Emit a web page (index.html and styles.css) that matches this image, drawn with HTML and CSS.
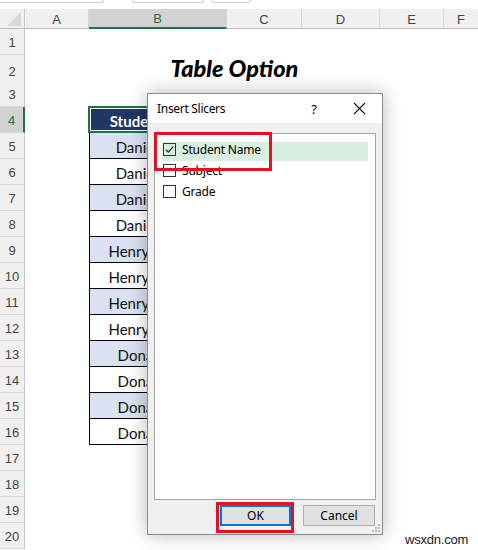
FILE: index.html
```html
<!DOCTYPE html>
<html>
<head>
<meta charset="utf-8">
<link rel="stylesheet" href="styles.css">
</head>
<body>
<div class="app">
  <div class="topstrip">
    <div class="tab tab1"></div>
    <div class="tab tab2"></div>
    <div class="tab tab3"></div>
  </div>
  <div class="sheet">
    <div class="row hdr">
      <div class="corner"><svg width="14" height="14" viewBox="0 0 14 14"><polygon points="14,0 14,14 0,14" fill="#d9d9d9"/></svg></div>
      <div class="ch">A</div>
      <div class="ch sel">B</div>
      <div class="ch">C</div>
      <div class="ch">D</div>
      <div class="ch">E</div>
      <div class="ch last">F</div>
    </div>
    <div class="row"><div class="rh">1</div></div>
    <div class="row"><div class="rh">2</div><div class="title">Table Option</div></div>
    <div class="row"><div class="rh">3</div></div>
    <div class="row"><div class="rh sel">4</div><div class="spacer"></div><div class="tcell thead">Student Name</div></div>
    <div class="row"><div class="rh">5</div><div class="spacer"></div><div class="tcell blue">Daniel James</div></div>
    <div class="row"><div class="rh">6</div><div class="spacer"></div><div class="tcell">Daniel James</div></div>
    <div class="row"><div class="rh">7</div><div class="spacer"></div><div class="tcell blue">Daniel James</div></div>
    <div class="row"><div class="rh">8</div><div class="spacer"></div><div class="tcell">Daniel James</div></div>
    <div class="row"><div class="rh">9</div><div class="spacer"></div><div class="tcell blue">Henry Williams</div></div>
    <div class="row"><div class="rh">10</div><div class="spacer"></div><div class="tcell">Henry Williams</div></div>
    <div class="row"><div class="rh">11</div><div class="spacer"></div><div class="tcell blue">Henry Williams</div></div>
    <div class="row"><div class="rh">12</div><div class="spacer"></div><div class="tcell">Henry Williams</div></div>
    <div class="row"><div class="rh">13</div><div class="spacer"></div><div class="tcell blue">Donald Ross</div></div>
    <div class="row"><div class="rh">14</div><div class="spacer"></div><div class="tcell">Donald Ross</div></div>
    <div class="row"><div class="rh">15</div><div class="spacer"></div><div class="tcell blue">Donald Ross</div></div>
    <div class="row"><div class="rh">16</div><div class="spacer"></div><div class="tcell">Donald Ross</div></div>
    <div class="row"><div class="rh">17</div></div>
    <div class="row"><div class="rh">18</div></div>
    <div class="row"><div class="rh">19</div></div>
    <div class="row"><div class="rh">20</div></div>
  </div>

  <div class="dialog">
    <div class="dtitle">
      <span class="dname">Insert Slicers</span>
      <span class="help">?</span>
      <svg class="close" width="13" height="13" viewBox="0 0 13 13"><path d="M1 1 L12 12 M12 1 L1 12" stroke="#111" stroke-width="1.1" fill="none"/></svg>
    </div>
    <div class="dbody">
      <div class="listbox">
        <div class="item checked">
          <span class="cb"><svg width="11" height="11" viewBox="0 0 11 11"><path d="M1.8 5.6 L4.3 8.1 L9.2 2.6" stroke="#222" stroke-width="1.3" fill="none"/></svg></span>
          <span class="lbl">Student Name</span>
        </div>
        <div class="item"><span class="cb"></span><span class="lbl">Subject</span></div>
        <div class="item"><span class="cb"></span><span class="lbl">Grade</span></div>
      </div>
    </div>
    <div class="dfoot">
      <button class="btn ok">OK</button>
      <button class="btn">Cancel</button>
      <svg class="grip" width="9" height="9" viewBox="0 0 9 9">
        <rect x="7" y="1" width="2" height="2" fill="#bdbdbd"/>
        <rect x="4" y="4" width="2" height="2" fill="#bdbdbd"/>
        <rect x="7" y="4" width="2" height="2" fill="#bdbdbd"/>
        <rect x="1" y="7" width="2" height="2" fill="#bdbdbd"/>
        <rect x="4" y="7" width="2" height="2" fill="#bdbdbd"/>
        <rect x="7" y="7" width="2" height="2" fill="#bdbdbd"/>
      </svg>
    </div>
    <div class="mark mark-list"></div>
    <div class="mark mark-ok"></div>
  </div>

  <div class="watermark">wsxdn.com</div>
</div>
</body>
</html>
```

FILE: styles.css
```css
* { box-sizing: border-box; }
html, body { margin: 0; padding: 0; }
body {
  width: 478px;
  height: 550px;
  overflow: hidden;
  background: #ffffff;
  font-family: "Lato", "Liberation Sans", sans-serif;
}
.app { position: relative; width: 478px; height: 550px; overflow: hidden; }

.topstrip {
  height: 9px;
  background: #ffffff;
  display: flex;
  align-items: flex-start;
}
.tab {
  height: 3px;
  border: 1px solid #cfcfcf;
  border-top: none;
  border-radius: 0 0 5px 5px;
  background: #fff;
}
.tab1 { width: 108px; margin-left: -4px; }
.tab2 { width: 72px; margin-left: 28px; }
.tab3 { width: 40px; margin-left: 7px; }

.sheet { display: flex; flex-direction: column; }
.row {
  display: grid;
  grid-template-columns: 25px 64px 138px 75px 78px 64px 1fr;
  height: 26px;
}
.row.hdr { height: 20px; background: #f0f0f0; }

.corner {
  border-right: 1px solid #c8c8c8;
  border-bottom: 1px solid #bdbdbd;
  display: flex;
  align-items: flex-end;
  justify-content: flex-end;
  padding: 0 3px 2px 0;
}
.ch {
  border-right: 1px solid #d5d5d5;
  border-bottom: 1px solid #bdbdbd;
  display: flex;
  align-items: center;
  justify-content: center;
  font-family: "Liberation Sans", sans-serif;
  font-size: 13px;
  color: #444;
  padding-top: 1px;
}
.ch.last { border-right: none; justify-content: flex-start; padding-left: 13px; }
.ch.sel {
  background: #d2d2d2;
  border-bottom: 2px solid #217346;
  color: #217346;
}

.rh {
  background: #f0f0f0;
  border-right: 1px solid #c8c8c8;
  border-bottom: 1px solid #d8d8d8;
  display: flex;
  align-items: center;
  justify-content: center;
  font-family: "Liberation Sans", sans-serif;
  font-size: 13px;
  color: #444;
  padding-top: 2px;
}
.rh.sel {
  background: #d2d2d2;
  border-right: 2px solid #217346;
  color: #217346;
}

.title {
  grid-column: 3 / 6;
  display: flex;
  align-items: center;
  justify-content: center;
  font-weight: 900;
  font-style: italic;
  font-size: 23.5px;
  line-height: 26px;
  color: #000;
  padding-bottom: 6px;
}

.tcell {
  border-left: 1px solid #000;
  border-bottom: 1px solid #000;
  display: flex;
  align-items: center;
  justify-content: center;
  font-size: 15px;
  color: #111;
  white-space: nowrap;
  overflow: hidden;
  padding-top: 2px;
}
.tcell.blue { background: #d9e1f2; }
.tcell.thead {
  background: #203764;
  color: #fff;
  font-weight: bold;
  border: 2px solid #217346;
  box-shadow: inset 0 0 0 1px #ffffff;
  margin: -1px 0 0 -1px;
  height: 27px;
}

/* dialog */
.dialog {
  position: absolute;
  left: 147px;
  top: 93px;
  width: 236px;
  height: 442px;
  border: 1px solid #8c8c8c;
  background: #f0f0f0;
  box-shadow: 0 0 18px rgba(0, 0, 0, 0.28);
  display: flex;
  flex-direction: column;
  font-family: "Noto Sans", "Open Sans", sans-serif;
  font-size: 12px;
  color: #000;
}
.dtitle {
  height: 29px;
  background: #ffffff;
  display: flex;
  align-items: center;
  padding-left: 9px;
}
.dname { flex: 1; font-size: 12px; letter-spacing: -0.3px; }
.help { width: 14px; margin-right: 32px; text-align: center; font-size: 13px; }
.close { margin-right: 16px; }

.dbody {
  flex: 1;
  padding: 10px 6px 0 6px;
  display: flex;
}
.listbox {
  flex: 1;
  background: #ffffff;
  border: 1px solid #a5a5a5;
  padding: 8px 7px 0 7px;
  display: flex;
  flex-direction: column;
}
.item {
  height: 19px;
  margin-bottom: 2px;
  display: flex;
  align-items: flex-start;
  gap: 6px;
  padding: 1px 0 0 1px;
  letter-spacing: -0.2px;
}
.lbl { line-height: 13px; margin-top: 0; }
.item.checked { background: #d6efe0; }
.cb {
  flex: none;
  width: 13px;
  height: 13px;
  border: 1px solid #333;
  background: #fff;
  display: flex;
  align-items: center;
  justify-content: center;
}
.item.checked .cb { background: #d6efe0; }

.dfoot {
  height: 34px;
  display: flex;
  justify-content: flex-end;
  align-items: flex-start;
  gap: 12px;
  padding: 5px 7px 0 0;
  position: relative;
}
.btn {
  width: 72px;
  height: 21px;
  background: #e1e1e1;
  border: 1px solid #adadad;
  font-family: "Noto Sans", "Open Sans", sans-serif;
  font-size: 12px;
  color: #000;
  padding: 0;
  margin: 0;
}
.btn.ok { border: 2px solid #0078d7; width: 71px; }
.grip { position: absolute; right: 2px; bottom: 2px; }

.mark {
  position: absolute;
  border: 3px solid #e3121c;
}
.mark-list { left: 6px; top: 38px; width: 118px; height: 39px; }
.mark-ok { left: 68px; top: 408px; width: 78px; height: 31px; }

.watermark {
  position: absolute;
  left: 405px;
  top: 532px;
  font-family: "Liberation Sans", sans-serif;
  font-size: 13px;
  color: #222;
  letter-spacing: -0.2px;
}
```
